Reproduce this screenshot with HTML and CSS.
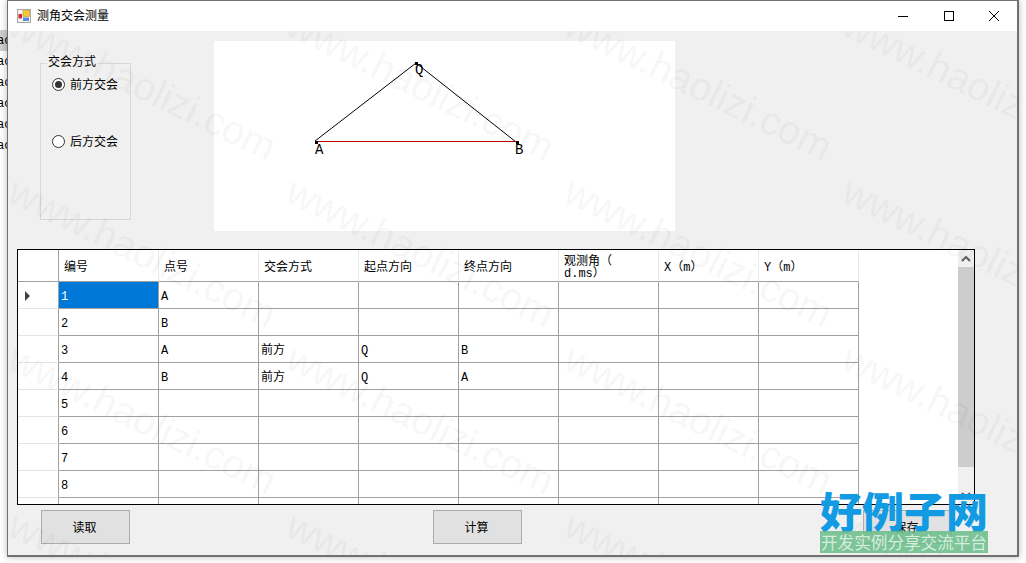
FILE: index.html
```html
<!DOCTYPE html>
<html lang="zh">
<head>
<meta charset="utf-8">
<title>测角交会测量</title>
<link rel="stylesheet" href="styles.css">
</head>
<body>
<div class="desktop">
  <div class="behind">
    <span class="behind-item selected">aca</span>
    <span class="behind-item">aca</span>
    <span class="behind-item">aca</span>
    <span class="behind-item">aca</span>
    <span class="behind-item">aca</span>
    <span class="behind-item">aca</span>
  </div>
  <main class="window">
    <header class="titlebar">
      <svg class="app-icon" width="14" height="14" viewBox="0 0 14 14">
        <rect x="0.5" y="0.5" width="13" height="13" fill="#f4f4f4" stroke="#a8a8a8"/>
        <rect x="6" y="1.5" width="6.5" height="6" fill="#f6c63c" stroke="#c79a20" stroke-width="0.6"/>
        <rect x="1.5" y="5" width="3.5" height="4.5" fill="#d0302a"/>
        <rect x="6" y="8.5" width="6" height="3.5" fill="#5b8fdc"/>
      </svg>
      <span class="title">测角交会测量</span>
      <div class="controls">
        <span class="ctl"><svg width="12" height="12" viewBox="0 0 12 12"><path d="M1 6.5h10" stroke="#000" fill="none"/></svg></span>
        <span class="ctl"><svg width="12" height="12" viewBox="0 0 12 12"><rect x="1.5" y="1.5" width="9" height="9" stroke="#000" fill="none"/></svg></span>
        <span class="ctl"><svg width="12" height="12" viewBox="0 0 12 12"><path d="M1 1l10 10M11 1L1 11" stroke="#000" fill="none"/></svg></span>
      </div>
    </header>
    <div class="client">
      <div class="top-row">
        <fieldset class="group">
          <legend class="group-label">交会方式</legend>
          <label class="radio first"><span class="dot on"></span>前方交会</label>
          <label class="radio second"><span class="dot"></span>后方交会</label>
        </fieldset>
        <div class="picture">
          <svg width="461" height="190" viewBox="0 0 461 190" shape-rendering="crispEdges">
            <path d="M101 100L202 22L302 101" fill="none" stroke="#000" shape-rendering="auto"/>
            <path d="M101 100.5H302" fill="none" stroke="#c00000"/>
            <rect x="101" y="100" width="3" height="3" fill="#000"/>
            <rect x="201" y="21" width="3" height="3" fill="#000"/>
            <rect x="302" y="100" width="3" height="3" fill="#000"/>
            <text class="pt" x="101" y="113">A</text>
            <text class="pt" x="201" y="33">Q</text>
            <text class="pt" x="301" y="113">B</text>
          </svg>
        </div>
      </div>
      <div class="grid-box">
        <div class="grid-clip">
          <table class="grid">
            <thead>
              <tr>
                <th class="rowhead"></th><th>编号</th><th>点号</th><th>交会方式</th><th>起点方向</th><th>终点方向</th><th class="tight">观测角（<br>d.ms）</th><th>X（m）</th><th>Y（m）</th>
              </tr>
            </thead>
            <tbody>
              <tr><td class="rowhead"><span class="cur"></span></td><td class="sel">1</td><td>A</td><td></td><td></td><td></td><td></td><td></td><td></td></tr>
              <tr><td class="rowhead"></td><td>2</td><td>B</td><td></td><td></td><td></td><td></td><td></td><td></td></tr>
              <tr><td class="rowhead"></td><td>3</td><td>A</td><td>前方</td><td>Q</td><td>B</td><td></td><td></td><td></td></tr>
              <tr><td class="rowhead"></td><td>4</td><td>B</td><td>前方</td><td>Q</td><td>A</td><td></td><td></td><td></td></tr>
              <tr><td class="rowhead"></td><td>5</td><td></td><td></td><td></td><td></td><td></td><td></td><td></td></tr>
              <tr><td class="rowhead"></td><td>6</td><td></td><td></td><td></td><td></td><td></td><td></td><td></td></tr>
              <tr><td class="rowhead"></td><td>7</td><td></td><td></td><td></td><td></td><td></td><td></td><td></td></tr>
              <tr><td class="rowhead"></td><td>8</td><td></td><td></td><td></td><td></td><td></td><td></td><td></td></tr>
              <tr><td class="rowhead"></td><td></td><td></td><td></td><td></td><td></td><td></td><td></td><td></td></tr>
            </tbody>
          </table>
        </div>
        <div class="scrollbar">
          <span class="arrow"><svg width="10" height="7" viewBox="0 0 10 7"><path d="M1 6l4-4 4 4" fill="none" stroke="#606060" stroke-width="2"/></svg></span>
          <span class="thumb"></span>
          <span class="arrow low"><svg width="10" height="7" viewBox="0 0 10 7"><path d="M1 1l4 4 4-4" fill="none" stroke="#606060" stroke-width="2"/></svg></span>
        </div>
      </div>
      <div class="button-row">
        <button class="btn">读取</button>
        <button class="btn calc">计算</button>
        <button class="btn save">保存</button>
      </div>
      <div class="watermarks" aria-hidden="true">
        <div class="wm-grid">
          <span class="wm">www.haolizi.com</span><span class="wm">www.haolizi.com</span><span class="wm">www.haolizi.com</span><span class="wm">www.haolizi.com</span>
          <span class="wm">www.haolizi.com</span><span class="wm">www.haolizi.com</span><span class="wm">www.haolizi.com</span><span class="wm">www.haolizi.com</span>
          <span class="wm">www.haolizi.com</span><span class="wm">www.haolizi.com</span><span class="wm">www.haolizi.com</span><span class="wm">www.haolizi.com</span>
          <span class="wm">www.haolizi.com</span><span class="wm">www.haolizi.com</span><span class="wm">www.haolizi.com</span><span class="wm">www.haolizi.com</span>
        </div>
      </div>
    </div>
  </main>
  <div class="logo">
    <div class="logo-main">好例子网</div>
    <div class="logo-sub">开发实例分享交流平台</div>
  </div>
</div>
</body>
</html>
```
FILE: styles.css
```css
* { box-sizing: border-box; }
html, body { margin: 0; height: 100%; }
body {
  background: #fff;
  font: 12px/14px "Liberation Mono", "Noto Sans CJK SC", monospace;
  color: #000;
  overflow: hidden;
}
.desktop { position: relative; width: 1026px; height: 563px; overflow: hidden; }

.behind {
  position: absolute; left: 0; top: 30px; width: 7px;
  display: flex; flex-direction: column;
  overflow: hidden;
}
.behind-item {
  height: 21px; line-height: 23px; white-space: nowrap;
  text-indent: -3px; font-size: 12px;
}
.behind-item.selected { background: #cfcfcf; }

.window {
  position: absolute; left: 7px; top: 0; width: 1012px; height: 557px;
  border: 1px solid #707070;
  border-width: 1px 2px 2px 1px;
  background: #f0f0f0;
  box-shadow: 0 0 7px rgba(0,0,0,.28);
  display: flex; flex-direction: column;
}
.titlebar {
  height: 30px; background: #fff;
  display: flex; align-items: center;
  padding-left: 9px;
  flex: none;
}
.app-icon { flex: none; }
.title { margin-left: 6px; font-size: 12px; padding-top: 2px; }
.controls { margin-left: auto; display: flex; }
.ctl { width: 45.5px; height: 30px; display: flex; align-items: center; justify-content: center; }

.client { position: relative; flex: 1; display: flex; flex-direction: column; padding-top: 10px; min-height: 0; }
.top-row { display: flex; height: 190px; flex: none; }
.group {
  margin: 15px 0 0 32px; padding: 0; width: 91px; height: 164px;
  border: 1px solid #d8d8d8; min-width: 0;
  display: flex; flex-direction: column;
}
.group-label { margin-left: 6px; padding: 0 1px; line-height: 14px; }
.radio { display: flex; align-items: center; gap: 5px; margin-left: 11px; height: 14px; }
.radio.first { margin-top: 9px; }
.radio.second { margin-top: 43px; }
.dot {
  width: 13px; height: 13px; border: 1px solid #333; border-radius: 50%; margin-top: -4px;
  background: #fff; display: flex; align-items: center; justify-content: center; flex: none;
}
.dot.on::after { content: ""; width: 7px; height: 7px; border-radius: 50%; background: #333; }
.picture { margin-left: 83px; width: 461px; height: 190px; background: #fff; }
.picture svg { display: block; }
.pt { font: 14px "Liberation Mono", monospace; fill: #000; }

.grid-box {
  margin: 18px 0 0 9px; width: 958px; height: 256px; flex: none;
  border: 1px solid #000; display: flex; background: #fff;
}
.grid-clip { width: 940px; height: 254px; overflow: hidden; flex: none; }
.grid { border-collapse: separate; border-spacing: 0; table-layout: fixed; width: 841px; }
.grid th, .grid td {
  width: 100px; padding: 4px 0 0 2px; font-weight: normal; text-align: left;
  border-right: 1px solid #a0a0a0; border-bottom: 1px solid #a0a0a0;
  height: 27px; vertical-align: middle; white-space: nowrap;
}
.grid th { height: 32px; padding-left: 5px; border-right-color: #e8e8e8; }
.grid th.rowhead, .grid td.rowhead { width: 41px; padding: 0; }
.grid td.rowhead { border-right-color: #a0a0a0; border-bottom-color: #e4e4e4; position: relative; }
.grid th.rowhead { border-right-color: #a0a0a0; }
.grid th.tight { line-height: 12px; padding-top: 5px; }
.grid td.sel { background: #0078d7; color: #fff; border-bottom-color: #a0a0a0; }
.cur {
  display: block; margin: 2px 0 0 7px; width: 0; height: 0;
  border-left: 5px solid #404040; border-top: 5px solid transparent; border-bottom: 5px solid transparent;
}
.scrollbar {
  width: 16px; height: 254px; background: #f0f0f0; flex: none;
  display: flex; flex-direction: column; align-items: center;
}
.arrow { height: 17px; display: flex; align-items: center; justify-content: center; flex: none; }
.arrow.low { margin-top: auto; }
.thumb { width: 16px; height: 200px; background: #cdcdcd; flex: none; }

.button-row { display: flex; margin: 5px 0 0 33px; }
.btn {
  width: 89px; height: 34px; padding: 3px 2px 0 0; background: #e1e1e1;
  border: 1px solid #adadad; border-radius: 0;
  font: inherit; color: #000;
}
.calc { margin-left: 303px; }
.save { margin-left: 341px; }

.watermarks {
  position: absolute; inset: 0; overflow: hidden; pointer-events: none;
}
.wm-grid {
  margin: -27px 0 0 12px;
  display: grid; grid-template-columns: repeat(4, 278px); grid-auto-rows: 167px;
}
.wm {
  display: block; width: 300px; white-space: nowrap;
  font: 39.5px/1 "Liberation Sans", sans-serif;
  color: rgba(0,0,0,.055);
  transform-origin: 0 0; transform: rotate(26deg);
}

.logo {
  position: absolute; left: 820px; top: 488px; width: 168px;
  display: flex; flex-direction: column; align-items: stretch;
}
.logo-main {
  height: 43px; font: 900 42px/43px "Noto Sans CJK SC", sans-serif;
  color: #129be2; white-space: nowrap;
}
.logo-sub {
  height: 22px; background: rgba(104,188,136,.85);
  color: #d5eddd; font: 16.6px/22px "Noto Sans CJK SC", sans-serif;
  white-space: nowrap; text-align: center;
}
```
